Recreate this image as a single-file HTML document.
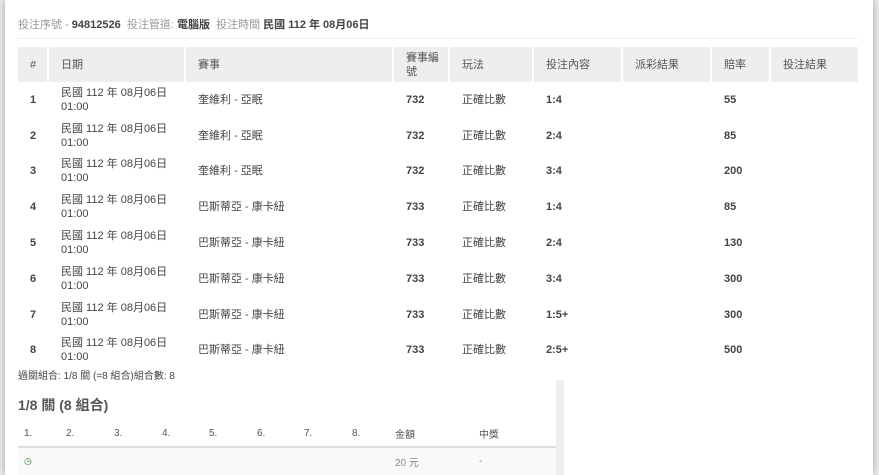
<!DOCTYPE html>
<html><head><meta charset="utf-8"><style>
*{margin:0;padding:0;box-sizing:border-box}
body{width:879px;height:475px;overflow:hidden;background:#eee;font-family:"Liberation Sans","Noto Sans CJK TC",sans-serif;color:#333;font-size:11px;position:relative}
.modal{position:absolute;left:5px;top:0;width:868px;height:475px;background:#fff;box-shadow:0 0 8px rgba(0,0,0,.35)}
.info{position:absolute;left:13px;top:16px;font-size:11px;color:#999}
.info b{color:#444}
.hr{position:absolute;left:13px;top:38px;width:840px;border-top:1px solid #eee}
table.t{position:absolute;left:13px;top:47px;border-collapse:separate;border-spacing:0;width:840px}
.t th{background:#eee;font-weight:normal;text-align:left;height:35px;padding:0 0 0 12px;border-right:2px solid #fff;color:#555;line-height:14px;vertical-align:middle}
.t td{height:35.8px;padding:0 0 0 12px;vertical-align:middle;line-height:14px;color:#444}
.n{font-weight:bold;color:#555}
.sum{position:absolute;left:13px;top:367px;font-size:10px;color:#444}
.side{position:absolute;left:551px;top:380px;width:8px;height:95px;background:#eee}
.h2{position:absolute;left:13px;top:395px;font-size:14px;font-weight:bold;color:#555}
table.c{position:absolute;left:13px;top:420px;border-collapse:collapse;width:538px}
.c th{text-align:left;height:27px;border-bottom:2px solid #ddd;color:#555;font-size:10px;font-weight:normal}
.c td{height:28px;background:#f9f9f9;color:#888;font-size:10px}
</style></head><body>
<div class="modal">
<div class="info">投注序號 - <b>94812526</b> &nbsp;投注管道: <b>電腦版</b> &nbsp;投注時間 <b>民國 112 年 08月06日</b></div>
<div class="hr"></div>
<table class="t">
<tr><th style="width:31px">#</th><th style="width:137px">日期</th><th style="width:208px">賽事</th><th style="width:56px">賽事編號</th><th style="width:84px">玩法</th><th style="width:89px">投注內容</th><th style="width:89px">派彩結果</th><th style="width:59px">賠率</th><th style="border-right:0">投注結果</th></tr>
<tr><td class="n">1</td><td>民國 112 年 08月06日<br>01:00</td><td>奎維利 - 亞眠</td><td class="n">732</td><td>正確比數</td><td class="n">1:4</td><td></td><td class="n">55</td><td></td></tr>
<tr><td class="n">2</td><td>民國 112 年 08月06日<br>01:00</td><td>奎維利 - 亞眠</td><td class="n">732</td><td>正確比數</td><td class="n">2:4</td><td></td><td class="n">85</td><td></td></tr>
<tr><td class="n">3</td><td>民國 112 年 08月06日<br>01:00</td><td>奎維利 - 亞眠</td><td class="n">732</td><td>正確比數</td><td class="n">3:4</td><td></td><td class="n">200</td><td></td></tr>
<tr><td class="n">4</td><td>民國 112 年 08月06日<br>01:00</td><td>巴斯蒂亞 - 康卡紐</td><td class="n">733</td><td>正確比數</td><td class="n">1:4</td><td></td><td class="n">85</td><td></td></tr>
<tr><td class="n">5</td><td>民國 112 年 08月06日<br>01:00</td><td>巴斯蒂亞 - 康卡紐</td><td class="n">733</td><td>正確比數</td><td class="n">2:4</td><td></td><td class="n">130</td><td></td></tr>
<tr><td class="n">6</td><td>民國 112 年 08月06日<br>01:00</td><td>巴斯蒂亞 - 康卡紐</td><td class="n">733</td><td>正確比數</td><td class="n">3:4</td><td></td><td class="n">300</td><td></td></tr>
<tr><td class="n">7</td><td>民國 112 年 08月06日<br>01:00</td><td>巴斯蒂亞 - 康卡紐</td><td class="n">733</td><td>正確比數</td><td class="n">1:5+</td><td></td><td class="n">300</td><td></td></tr>
<tr><td class="n">8</td><td>民國 112 年 08月06日<br>01:00</td><td>巴斯蒂亞 - 康卡紐</td><td class="n">733</td><td>正確比數</td><td class="n">2:5+</td><td></td><td class="n">500</td><td></td></tr>
</table>
<div class="sum">過關組合: 1/8 關 (=8 組合)組合數: 8</div>
<div class="side"></div>
<div class="h2">1/8 關 (8 組合)</div>
<table class="c">
<tr><th style="width:48px;padding-left:6px">1.</th><th style="width:48px">2.</th><th style="width:48px">3.</th><th style="width:47px">4.</th><th style="width:48px">5.</th><th style="width:47px">6.</th><th style="width:48px">7.</th><th style="width:43px">8.</th><th style="width:84px">金額</th><th>中獎</th></tr>
<tr><td style="padding-left:6px;color:#2a8a3a;font-size:9px">◷</td><td></td><td></td><td></td><td></td><td></td><td></td><td></td><td>20 元</td><td>-</td></tr>
</table>
</div>
</body></html>
